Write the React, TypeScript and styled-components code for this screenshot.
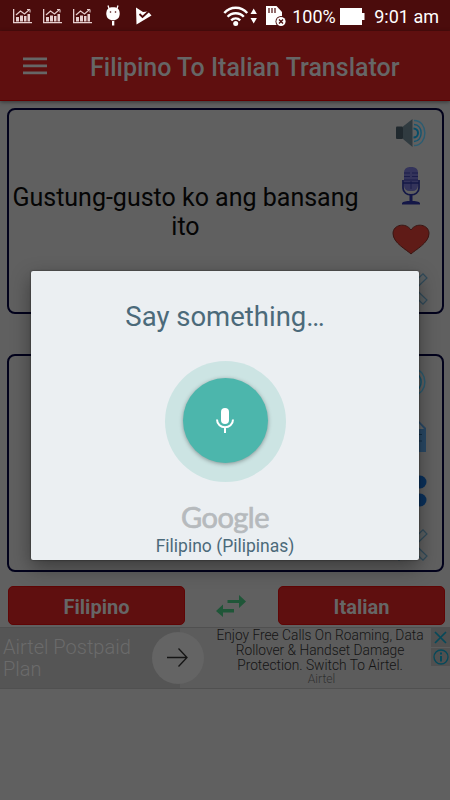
import React from 'react';
import styled, { createGlobalStyle } from 'styled-components';

const GlobalStyle = createGlobalStyle`
    body {
        margin: 0;
        background: #606060;
        font-family: Roboto, sans-serif;
    }

    * {
        box-sizing: border-box;
    }

    svg {
        display: block;
        flex: none;
    }
`;

const Screen = styled.div`
    position: relative;
    width: 450px;
    height: 800px;
    overflow: hidden;
    background: #606060;
    display: flex;
    flex-direction: column;
`;

const StatusBar = styled.div`
    height: 31px;
    flex: none;
    background: #4b0c0c;
    color: #ffffff;
    display: flex;
    justify-content: space-between;
    align-items: center;
    padding: 0 11px 0 13px;
`;

const Notifications = styled.div`
    display: flex;
    align-items: center;
    gap: 11px;
`;

const AlertIcons = styled.div`
    display: flex;
    align-items: center;
    gap: 15px;
    margin-left: 3px;
`;

const SystemIcons = styled.div`
    display: flex;
    align-items: center;
    font-size: 18px;
    line-height: 31px;
    padding-top: 1px;
    white-space: nowrap;
`;

const BatteryLevel = styled.span`
    width: 42px;
    margin: 0 6px 0 6px;
`;

const Clock = styled.span`
    margin-left: 9px;
`;

const Header = styled.header`
    height: 70px;
    flex: none;
    background: #5f0f0f;
    border-bottom: 1px solid #600000;
    box-shadow: 0 1px 4px rgba(0, 0, 0, 0.45);
    display: flex;
    align-items: center;
    padding: 0 0 0 23px;
`;

const Title = styled.h1`
    margin: 4px 0 0 43px;
    font-size: 25px;
    font-weight: 500;
    color: #666666;
    white-space: nowrap;
`;

const Panel = styled.section<{ $height: number; $top: number }>`
    height: ${({ $height }) => $height}px;
    flex: none;
    margin: ${({ $top }) => $top}px 6px 0 7px;
    border: 2px solid #02021c;
    border-radius: 8px;
    display: flex;
`;

const PanelText = styled.div`
    width: 353px;
    padding-top: 2px;
    display: flex;
    align-items: center;
    justify-content: center;
    text-align: center;
    font-size: 25px;
    line-height: 29px;
    color: #050505;
`;

const Actions = styled.div<{ $rows: string }>`
    flex: 1;
    display: grid;
    grid-template-rows: ${({ $rows }) => $rows};
    align-content: start;
    align-items: center;
    justify-items: center;
    padding-left: 17px;
`;

const Languages = styled.div`
    height: 39px;
    flex: none;
    margin: 14px 5px 0 8px;
    display: flex;
    align-items: center;
    justify-content: space-between;
`;

const LanguageButton = styled.button<{ $width: number }>`
    width: ${({ $width }) => $width}px;
    height: 39px;
    padding: 2px 0 0;
    border: 1px solid #5f0505;
    border-radius: 5px;
    background: #5f0f0f;
    color: #666666;
    font: bold 20px Roboto, sans-serif;
`;

const Banner = styled.div`
    height: 62px;
    flex: none;
    margin-top: 2px;
    border-top: 1px solid #505050;
    border-bottom: 1px solid #505050;
    background: #5c5c5c;
    display: flex;
`;

const Offer = styled.div`
    width: 180px;
    flex: none;
    background: #555555;
    display: flex;
    align-items: center;
`;

const OfferName = styled.div`
    width: 149px;
    flex: none;
    padding-left: 3px;
    font-size: 20px;
    line-height: 22.5px;
    font-weight: 300;
    color: #6b6b6b;
`;

const OfferArrow = styled.div`
    width: 52px;
    height: 52px;
    flex: none;
    margin-left: 3px;
    border-radius: 50%;
    background: #646464;
    display: flex;
    align-items: center;
    justify-content: center;
`;

const OfferText = styled.div`
    width: 212px;
    margin-left: 34px;
    text-align: center;
    font-size: 13.75px;
    line-height: 15px;
    font-weight: 300;
    color: #141414;
    white-space: nowrap;
`;

const Advertiser = styled.div`
    font-size: 12px;
    line-height: 13px;
    color: #303030;
    margin-left: 3px;
`;

const BannerControls = styled.div`
    margin-left: auto;
    display: flex;
    flex-direction: column;
    gap: 1px;
`;

const BannerControl = styled.div`
    width: 19px;
    height: 18.5px;
    background: #505050;
    display: flex;
    align-items: center;
    justify-content: center;
`;

const Dialog = styled.div`
    position: absolute;
    left: 31px;
    top: 271px;
    width: 388px;
    height: 288.5px;
    border-radius: 2px;
    background: #ebeff2;
    box-shadow: 0 7px 20px rgba(0, 0, 0, 0.4), 0 0 2px rgba(0, 0, 0, 0.6);
    display: flex;
    flex-direction: column;
    align-items: center;
    color: #4b6a7a;
`;

const Prompt = styled.div`
    margin-top: 29px;
    font-size: 27.5px;
    line-height: 34px;
`;

const MicHalo = styled.div`
    width: 121px;
    height: 121px;
    margin-top: 27px;
    border-radius: 50%;
    background: #cce4e3;
    display: flex;
    justify-content: center;
`;

const MicButton = styled.div`
    width: 85px;
    height: 85px;
    margin-top: 17px;
    border-radius: 50%;
    background: #4cb6ac;
    box-shadow: 0 1px 4px rgba(0, 0, 0, 0.35);
    display: flex;
    align-items: center;
    justify-content: center;
`;

const Brand = styled.div`
    margin-top: 16px;
    height: 37px;
    font: 400 29px/37px Lato, sans-serif;
    letter-spacing: -0.5px;
    -webkit-text-stroke: 0.7px #b6babd;
    color: #b6babd;
`;

const Language = styled.div`
    font-size: 17.5px;
    line-height: 20px;
    margin-top: 1px;
`;

const ChartIcon = () => (
    <svg width="19" height="16" viewBox="0 0 19 16" fill="#e6cfcf">
        <path d="M0 1h1.300v13H19v1.300H0z" />
        <path d="M3 9h3v4.500H3zM7 7.500h3v6H7zM11 8h2.500v5.500H11zM14.500 6H17v7.500h-2.500z" />
        <path d="M3 7L7.500 3l4 3L16 2" fill="none" stroke="#e6cfcf" strokeWidth="1.200" />
        <path d="M14 1.500h3v3" fill="none" stroke="#e6cfcf" />
    </svg>
);

const AndroidIcon = () => (
    <svg width="14" height="21" viewBox="0 0 14 21" fill="#fff">
        <path d="M.3 8.500C.3 4 3 2.300 7 2.300s6.700 1.700 6.700 6.200S11 15.300 7 15.300.3 13 .3 8.500z" />
        <path d="M2 .5L3.500 5M12 .5L10.500 5" stroke="#fff" strokeWidth="1.300" />
        <rect x="6" y="16" width="2.300" height="4.500" />
        <circle cx="4.500" cy="7" r=".8" fill="#4b0c0c" />
        <circle cx="9.500" cy="7" r=".8" fill="#4b0c0c" />
    </svg>
);

const PlayCheckIcon = () => (
    <svg width="17" height="18" viewBox="0 0 17 18">
        <path d="M1 .5l7 4.500 5-.5L16.500 8.500 1.500 17.500z" fill="#fff" />
        <path d="M4.500 7l3 3 6.500-6" fill="none" stroke="#4b0c0c" strokeWidth="1.800" />
    </svg>
);

const WifiIcon = () => (
    <svg width="41" height="22" viewBox="0 0 41 22" fill="none" stroke="#fff" strokeWidth="2.400">
        <path d="M1.300 8c6-7 16.900-7 22.900 0M4.600 11.700c4.200-4.600 12-4.600 16.200 0M8.200 15.300c2.500-2.600 6.500-2.600 9 0" />
        <circle cx="12.700" cy="18.500" r="2.500" fill="#fff" stroke="none" />
        <path d="M27.500 9l3.200-5.500L33.900 9zM27.500 13l3.200 5.500 3.200-5.500z" fill="#fff" stroke="none" />
    </svg>
);

const SdCardIcon = () => (
    <svg width="22" height="22" viewBox="0 0 22 22">
        <path d="M2 1h10.500L18 7v13H2z" fill="#fff" />
        <path d="M5 3v5M8 3v5M11 3v5" stroke="#4b0c0c" strokeWidth="1.200" />
        <circle cx="17" cy="16.500" r="5.500" fill="#4b0c0c" />
        <circle cx="17" cy="16.500" r="4.600" fill="#fff" />
        <path d="M15 14.500l4 4M19 14.500l-4 4" stroke="#4b0c0c" strokeWidth="1.400" />
    </svg>
);

const BatteryIcon = () => (
    <svg width="25" height="17" viewBox="0 0 25 17" fill="#fff">
        <path d="M0 0h22v5h2.500v7H22v5H0z" />
    </svg>
);

const MenuIcon = () => (
    <svg width="24" height="18" viewBox="0 0 24 18" fill="#666">
        <path d="M0 .5h24v2.700H0zM0 7.500h24v2.700H0zM0 14.500h24v2.700H0z" />
    </svg>
);

const SpeakerIcon = () => (
    <svg width="30" height="28" viewBox="0 0 30 28">
        <rect x="0" y="7.500" width="7" height="12.500" rx="1" fill="#20292e" />
        <path d="M7 7.500L16.500 0v28L7 20z" fill="#303b40" />
        <g fill="none" strokeWidth="1.400">
            <path d="M17.500 9.500a4.500 4.500 0 010 9" stroke="#064d68" strokeWidth="2" />
            <path d="M18 5.500c9.500 0 9.500 17 0 17" stroke="#145570" />
            <path d="M18 1.500c14.500 0 14.500 25 0 25" stroke="#2b5c71" />
        </g>
    </svg>
);

const StudioMicIcon = () => (
    <svg width="20" height="38" viewBox="0 0 20 38">
        <rect x="3" y="0" width="14" height="24" rx="5.500" fill="#34345b" />
        <path d="M3 6h6M11 6h6M3 9.500h6M11 9.500h6M3 13h14M10 14v8" stroke="#1b1d4a" strokeWidth="1" />
        <path d="M2 13v8c0 9 16 9 16 0v-8M2 16h16" fill="none" stroke="#141847" strokeWidth="1.700" />
        <path d="M8.500 27h3v7h-3zM1 37.500V36c1-1.500 4-2 9-2s8 .5 9 2v1.500z" fill="#141747" />
    </svg>
);

const HeartIcon = () => (
    <svg width="38" height="31" viewBox="0 0 38 31">
        <path d="M19 30C15 26 1 19 1 9.500 1 .500 14-2 19 6c5-8 18-5.500 18 3.500C37 19 23 26 19 30z" fill="#5f1b17" stroke="#391512" />
    </svg>
);

const CloseIcon = () => (
    <svg width="34" height="32" viewBox="0 0 34 32">
        <path d="M5 .800l12 11.500L29 .800l4 4.200-11.500 11L33 27l-4 4.200-12-11.500L5 31.200 1 27l11.500-11L1 5z" fill="#5b6062" stroke="#314b5a" strokeWidth="1.200" />
    </svg>
);

const PaperIcon = () => (
    <svg width="30" height="34" viewBox="0 0 30 34">
        <path d="M0 9L8 1h14l8 8v24H0z" fill="#294966" />
        <path d="M3 10V2h18l7 8z" fill="#626668" />
        <path d="M5 15.500h21M5 22h21" stroke="#122f45" strokeWidth="1.200" />
    </svg>
);

const ShareIcon = () => (
    <svg width="34" height="32" viewBox="0 0 34 32" fill="#0a315c">
        <path d="M7 16L26 7M7 16l19 9" stroke="#0a315c" strokeWidth="3" />
        <circle cx="7" cy="16" r="6.500" />
        <circle cx="26" cy="7" r="6.500" />
        <circle cx="26" cy="25" r="6.500" />
    </svg>
);

const SwapIcon = () => (
    <svg width="31" height="22" viewBox="0 0 31 22" fill="#1f5638">
        <path d="M11.500 5H23V0l7 6.500-7 6.500V8H11.500zM18 14H7V9.500L0 16l7 6v-4.500h11z" />
    </svg>
);

const ArrowIcon = () => (
    <svg width="22" height="20" viewBox="0 0 22 20" fill="none" stroke="#151515" strokeWidth="1.300">
        <path d="M0 9.500h20M11.500 .5l8.500 9-8.500 9" />
    </svg>
);

const MicIcon = () => (
    <svg width="18" height="25" viewBox="0 0 18 25">
        <rect x="5" y="0" width="8" height="16" rx="4" fill="#fff" />
        <path d="M1 11.500c0 10.300 16 10.300 16 0M9 19v6" fill="none" stroke="#fff" strokeWidth="2" />
    </svg>
);

export default function App() {
    return (
        <>
            <GlobalStyle />
            <Screen>
                <StatusBar>
                    <Notifications>
                        <ChartIcon />
                        <ChartIcon />
                        <ChartIcon />
                        <AlertIcons>
                            <AndroidIcon />
                            <PlayCheckIcon />
                        </AlertIcons>
                    </Notifications>
                    <SystemIcons>
                        <WifiIcon />
                        <SdCardIcon />
                        <BatteryLevel>100%</BatteryLevel>
                        <BatteryIcon />
                        <Clock>9:01 am</Clock>
                    </SystemIcons>
                </StatusBar>
                <Header>
                    <MenuIcon />
                    <Title>Filipino To Italian Translator</Title>
                </Header>
                <Panel $height={206} $top={7}>
                    <PanelText>Gustung-gusto ko ang bansang ito</PanelText>
                    <Actions $rows="46px 60px 46px 54px">
                        <SpeakerIcon />
                        <StudioMicIcon />
                        <HeartIcon />
                        <CloseIcon />
                    </Actions>
                </Panel>
                <Panel $height={218} $top={40}>
                    <PanelText />
                    <Actions $rows="52px 56px 54px 54px">
                        <SpeakerIcon />
                        <PaperIcon />
                        <ShareIcon />
                        <CloseIcon />
                    </Actions>
                </Panel>
                <Languages>
                    <LanguageButton $width={177}>Filipino</LanguageButton>
                    <SwapIcon />
                    <LanguageButton $width={167}>Italian</LanguageButton>
                </Languages>
                <Banner>
                    <Offer>
                        <OfferName>Airtel Postpaid Plan</OfferName>
                        <OfferArrow><ArrowIcon /></OfferArrow>
                    </Offer>
                    <OfferText>
                        Enjoy Free Calls On Roaming, Data<br />
                        Rollover &amp; Handset Damage<br />
                        Protection. Switch To Airtel.
                        <Advertiser>Airtel</Advertiser>
                    </OfferText>
                    <BannerControls>
                        <BannerControl>
                            <svg width="13" height="13" viewBox="0 0 13 13" stroke="#06495a" strokeWidth="1.700">
                                <path d="M1 1l11 11M12 1L1 12" />
                            </svg>
                        </BannerControl>
                        <BannerControl>
                            <svg width="16" height="16" viewBox="0 0 16 16" fill="none" stroke="#06495a" strokeWidth="1.300">
                                <circle cx="8" cy="8" r="7" />
                                <path d="M8 3.500v2M8 7v5.500" strokeWidth="2" />
                            </svg>
                        </BannerControl>
                    </BannerControls>
                </Banner>
                <Dialog>
                    <Prompt>Say something…</Prompt>
                    <MicHalo>
                        <MicButton><MicIcon /></MicButton>
                    </MicHalo>
                    <Brand>Google</Brand>
                    <Language>Filipino (Pilipinas)</Language>
                </Dialog>
            </Screen>
        </>
    );
}
